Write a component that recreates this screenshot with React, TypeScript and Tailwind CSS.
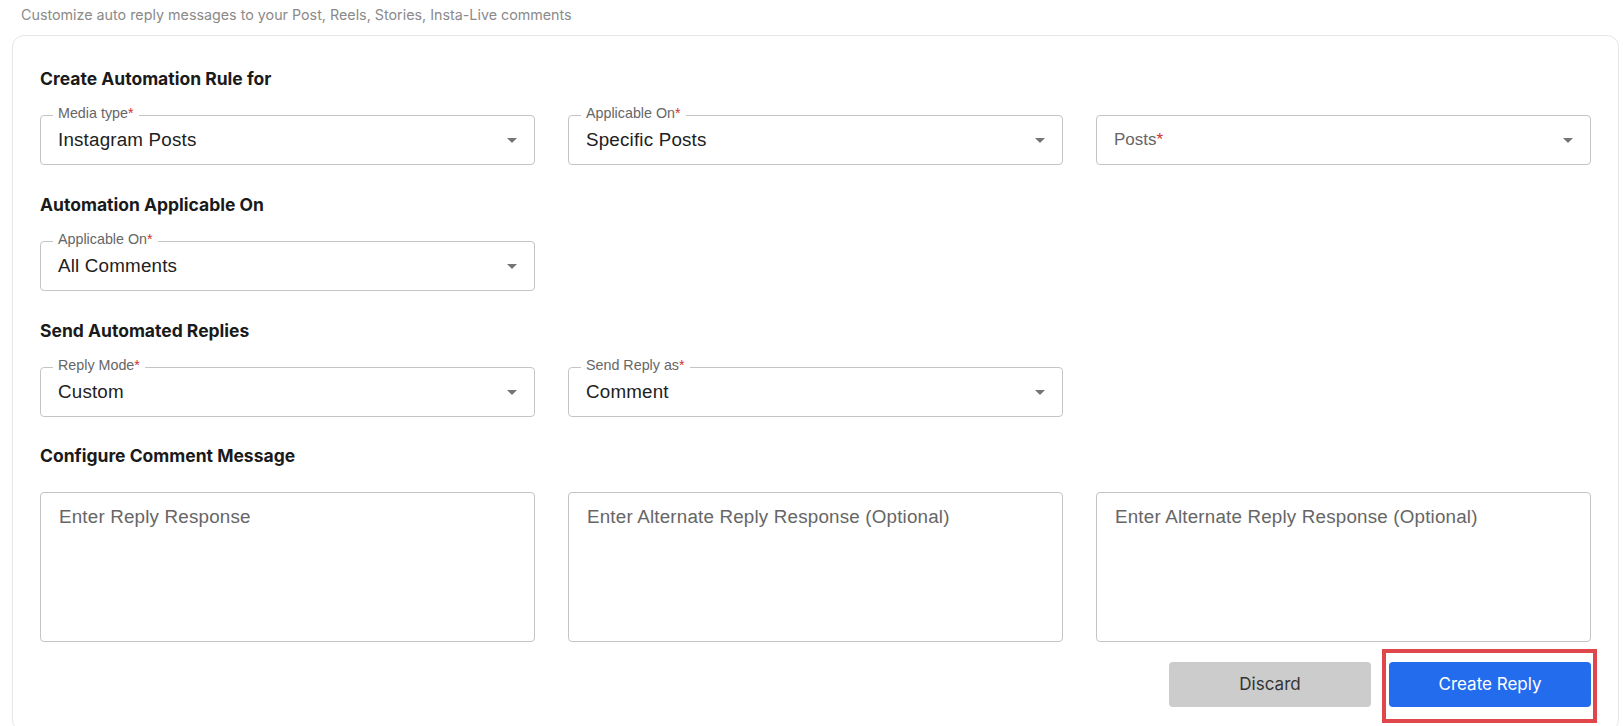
import React from "react";

type SelectProps = {
  label: string;
  value?: string;
};

function ArrowDrop() {
  return (
    <svg viewBox="0 0 24 24" className="h-[24px] w-[24px] shrink-0 fill-[#757575]">
      <path d="M7 10l5 5 5-5z" />
    </svg>
  );
}

// outlined select, label sits in the top border when a value is set
function SelectField({ label, value }: SelectProps) {
  if (!value) {
    return (
      <div className="flex h-[50px] items-center justify-between rounded-[4px] border border-[#c4c4c4] pl-[17px] pr-[10px]">
        <span className="text-[17px] text-[#666]">
          {label}
          <span className="text-[#d32f2f]">*</span>
        </span>
        <ArrowDrop />
      </div>
    );
  }
  return (
    <div className="relative flex h-[50px] items-center justify-between rounded-[4px] border border-[#c4c4c4] pl-[17px] pr-[10px]">
      <span className="absolute left-[12px] top-[-11px] bg-white px-[5px] text-[14.3px] leading-[16px] text-[#666]">
        {label}
        <span className="text-[#d32f2f]">*</span>
      </span>
      <span className="text-[18.8px] tracking-[0.01em] text-[#212121]">{value}</span>
      <ArrowDrop />
    </div>
  );
}

function Heading({ children }: { children: React.ReactNode }) {
  return (
    <h2 className="font-['Inter',sans-serif] text-[17.5px] font-bold leading-[24px] text-[#1a1a1a]">
      {children}
    </h2>
  );
}

function ReplyBox({ placeholder }: { placeholder: string }) {
  return (
    <textarea
      placeholder={placeholder}
      className="h-[150px] resize-none rounded-[4px] border border-[#c4c4c4] px-[18px] pt-[12px] text-[18.8px] leading-[24px] tracking-[0.01em] text-[#212121] outline-none placeholder:text-[#666]"
    />
  );
}

export default function App() {
  return (
    <div className="h-screen overflow-hidden bg-white font-['Liberation_Sans',Arial,sans-serif]">
      <p className="pl-[21px] pt-[5px] font-['Inter',sans-serif] text-[14.3px] leading-[20px] text-[#8a8a8a]">
        Customize auto reply messages to your Post, Reels, Stories, Insta-Live comments
      </p>

      <div className="ml-[12px] mr-[4px] mt-[10px] rounded-[12px] border border-[#e6e6e6] px-[27px] pb-[24px] pt-[31px]">
        <Heading>Create Automation Rule for</Heading>
        <div className="mt-[24px] grid grid-cols-3 gap-x-[33px]">
          <SelectField label="Media type" value="Instagram Posts" />
          <SelectField label="Applicable On" value="Specific Posts" />
          <SelectField label="Posts" />
        </div>

        <div className="mt-[28px]">
          <Heading>Automation Applicable On</Heading>
        </div>
        <div className="mt-[24px] grid grid-cols-3 gap-x-[33px]">
          <SelectField label="Applicable On" value="All Comments" />
        </div>

        <div className="mt-[28px]">
          <Heading>Send Automated Replies</Heading>
        </div>
        <div className="mt-[24px] grid grid-cols-3 gap-x-[33px]">
          <SelectField label="Reply Mode" value="Custom" />
          <SelectField label="Send Reply as" value="Comment" />
        </div>

        <div className="mt-[27px]">
          <Heading>Configure Comment Message</Heading>
        </div>
        <div className="mt-[24px] grid grid-cols-3 gap-x-[33px]">
          <ReplyBox placeholder="Enter Reply Response" />
          <ReplyBox placeholder="Enter Alternate Reply Response (Optional)" />
          <ReplyBox placeholder="Enter Alternate Reply Response (Optional)" />
        </div>

        <div className="mt-[20px] flex justify-end gap-[18px]">
          <button className="h-[45px] w-[202px] rounded-[4px] bg-[#cccccc] font-['Inter',sans-serif] text-[17px] text-[#333]">
            Discard
          </button>
          <div className="relative">
            <button className="h-[45px] w-[202px] rounded-[4px] bg-[#246cee] font-['Inter',sans-serif] text-[17px] text-white">
              Create Reply
            </button>
            {/* highlight box drawn over the screenshot */}
            <div className="pointer-events-none absolute -bottom-[16px] -left-[7px] -right-[6px] -top-[13px] border-[4px] border-[#e0474c]" />
          </div>
        </div>
      </div>
    </div>
  );
}
